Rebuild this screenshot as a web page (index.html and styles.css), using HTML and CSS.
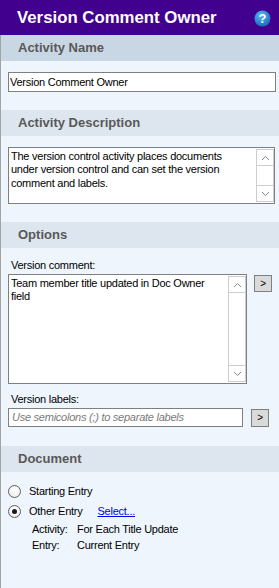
FILE: index.html
```html
<!DOCTYPE html>
<html>
<head>
<meta charset="utf-8">
<link rel="stylesheet" href="styles.css">
</head>
<body>
<div class="titlebar">
  <span class="title">Version Comment Owner</span>
  <svg class="help" width="17" height="17" viewBox="0 0 17 17">
    <defs>
      <radialGradient id="hg" cx="0.4" cy="0.3" r="0.75">
        <stop offset="0" stop-color="#5cb8f2"/>
        <stop offset="1" stop-color="#1668bd"/>
      </radialGradient>
    </defs>
    <circle cx="8.5" cy="8.5" r="8" fill="url(#hg)"/>
    <text x="8.5" y="13" text-anchor="middle" class="help-q">?</text>
  </svg>
</div>
<div class="panel">
  <section class="sec">
    <div class="hdr hdr-active">Activity Name</div>
    <div class="body body-name">
      <div class="input">Version Comment Owner</div>
    </div>
  </section>
  <section class="sec">
    <div class="hdr">Activity Description</div>
    <div class="body body-desc">
      <div class="ta ta-desc">
        <div class="ta-text">The version control activity places documents<br>under version control and can set the version<br>comment and labels.</div>
        <div class="sb">
          <div class="sb-btn sb-up"><svg width="9" height="6" viewBox="0 0 9 6"><polyline points="1,5 4.5,1.5 8,5" fill="none" stroke="#8a8a8a" stroke-width="1"/></svg></div>
          <div class="sb-btn sb-down"><svg width="9" height="6" viewBox="0 0 9 6"><polyline points="1,1 4.5,4.5 8,1" fill="none" stroke="#8a8a8a" stroke-width="1"/></svg></div>
        </div>
      </div>
    </div>
  </section>
  <section class="sec">
    <div class="hdr">Options</div>
    <div class="body body-opts">
      <div class="lbl">Version comment:</div>
      <div class="row">
        <div class="ta ta-comment">
          <div class="ta-text">Team member title updated in Doc Owner<br>field</div>
          <div class="sb">
            <div class="sb-btn sb-up"><svg width="9" height="6" viewBox="0 0 9 6"><polyline points="1,5 4.5,1.5 8,5" fill="none" stroke="#8a8a8a" stroke-width="1"/></svg></div>
            <div class="sb-btn sb-down"><svg width="9" height="6" viewBox="0 0 9 6"><polyline points="1,1 4.5,4.5 8,1" fill="none" stroke="#8a8a8a" stroke-width="1"/></svg></div>
          </div>
        </div>
        <div class="btn btn-comment">&gt;</div>
      </div>
      <div class="lbl lbl-labels">Version labels:</div>
      <div class="row">
        <div class="input input-labels"><span class="ph">Use semicolons (;) to separate labels</span></div>
        <div class="btn btn-labels">&gt;</div>
      </div>
    </div>
  </section>
  <section class="sec">
    <div class="hdr">Document</div>
    <div class="body body-doc">
      <div class="radio-row"><span class="radio"></span><span>Starting Entry</span></div>
      <div class="radio-row"><span class="radio checked"></span><span>Other Entry</span><a class="link">Select...</a></div>
      <div class="info">
        <span>Activity:</span><span>For Each Title Update</span>
        <span>Entry:</span><span>Current Entry</span>
      </div>
    </div>
  </section>
</div>
</body>
</html>
```
FILE: styles.css
```css
* { box-sizing: border-box; }
html, body { margin: 0; padding: 0; }
body {
  width: 279px;
  height: 588px;
  overflow: hidden;
  background: #eef5fd;
  font-family: "Liberation Sans", Arial, sans-serif;
  font-size: 11px;
  letter-spacing: -0.25px;
  color: #000;
}
.titlebar {
  height: 35px;
  background: #42008f;
  display: flex;
  align-items: center;
  justify-content: space-between;
  padding: 0 8px 0 17px;
  letter-spacing: 0;
}
.title {
  color: #fff;
  font-weight: bold;
  font-size: 16.8px;
  line-height: 35px;
}
.help { display: block; margin-top: 1px; }
.help-q {
  fill: #fff;
  font-family: "Liberation Sans", Arial, sans-serif;
  font-weight: bold;
  font-size: 13px;
}
.panel {
  border-left: 1px solid #a3a3a3;
  height: 553px;
}
.hdr {
  height: 26px;
  line-height: 26px;
  padding-left: 17px;
  background: #dde5ee;
  color: #595959;
  font-weight: bold;
  font-size: 13px;
  letter-spacing: 0;
}
.hdr-active { background: #c9d6e3; }
.body { padding-left: 7px; }
.body-name { padding-top: 11px; padding-right: 3px; padding-bottom: 18px; }
.input {
  height: 20px;
  background: #fff;
  border: 1px solid #7f7f7f;
  padding-left: 1px;
  line-height: 18px;
  white-space: nowrap;
  overflow: hidden;
}
.body-desc { padding-top: 11px; padding-right: 4px; padding-bottom: 18px; }
.ta {
  background: #fff;
  border: 1px solid #7f7f7f;
  display: flex;
}
.ta-desc { height: 57px; }
.ta-text {
  flex: 1;
  padding: 2px 2px 0 2px;
  line-height: 13.3px;
  white-space: nowrap;
  overflow: hidden;
}
.sb {
  width: 18px;
  margin: 1px 0 1px 0;
  border: 1px solid #cdcdcd;
  display: flex;
  flex-direction: column;
  justify-content: space-between;
}
.sb-btn {
  height: 16px;
  display: flex;
  align-items: center;
  justify-content: center;
}
.sb-btn svg { display: block; }
.sb-up { border-bottom: 1px solid #cdcdcd; }
.sb-down { border-top: 1px solid #cdcdcd; }
.body-opts { padding-top: 10px; padding-bottom: 19px; }
.lbl { line-height: 14px; margin-bottom: 2px; padding-left: 3px; }
.lbl-labels { margin-top: 8px; }
.row { display: flex; align-items: flex-start; }
.ta-comment { width: 239px; height: 110px; }
.btn {
  background: #dadada;
  border: 1px solid #7f7f7f;
  display: flex;
  align-items: center;
  justify-content: center;
  font-size: 10px;
  line-height: 1;
}
.btn-comment { width: 18px; height: 17px; margin-left: 7px; margin-top: 1px; }
.input-labels { width: 235px; height: 19px; line-height: 17px; padding-left: 3px; }
.ph { color: #7a7a7a; font-style: italic; }
.btn-labels { width: 18px; height: 18px; margin-left: 8px; margin-top: 1px; }
.body-doc { padding-top: 9px; }
.radio-row { height: 20px; display: flex; align-items: center; }
.radio {
  width: 13px;
  height: 13px;
  border-radius: 50%;
  border: 1px solid #5f5f5f;
  background: radial-gradient(circle at 50% 40%, #ffffff 0%, #f2f2f2 60%, #dcdcdc 100%);
  margin-right: 8px;
  display: flex;
  align-items: center;
  justify-content: center;
}
.radio.checked::after {
  content: "";
  width: 5px;
  height: 5px;
  border-radius: 50%;
  background: #1a1a1a;
}
.link { color: #0000ee; text-decoration: underline; margin-left: 15px; }
.info {
  display: grid;
  grid-template-columns: 45px auto;
  grid-auto-rows: 16px;
  align-items: center;
  padding-left: 24px;
}
```
